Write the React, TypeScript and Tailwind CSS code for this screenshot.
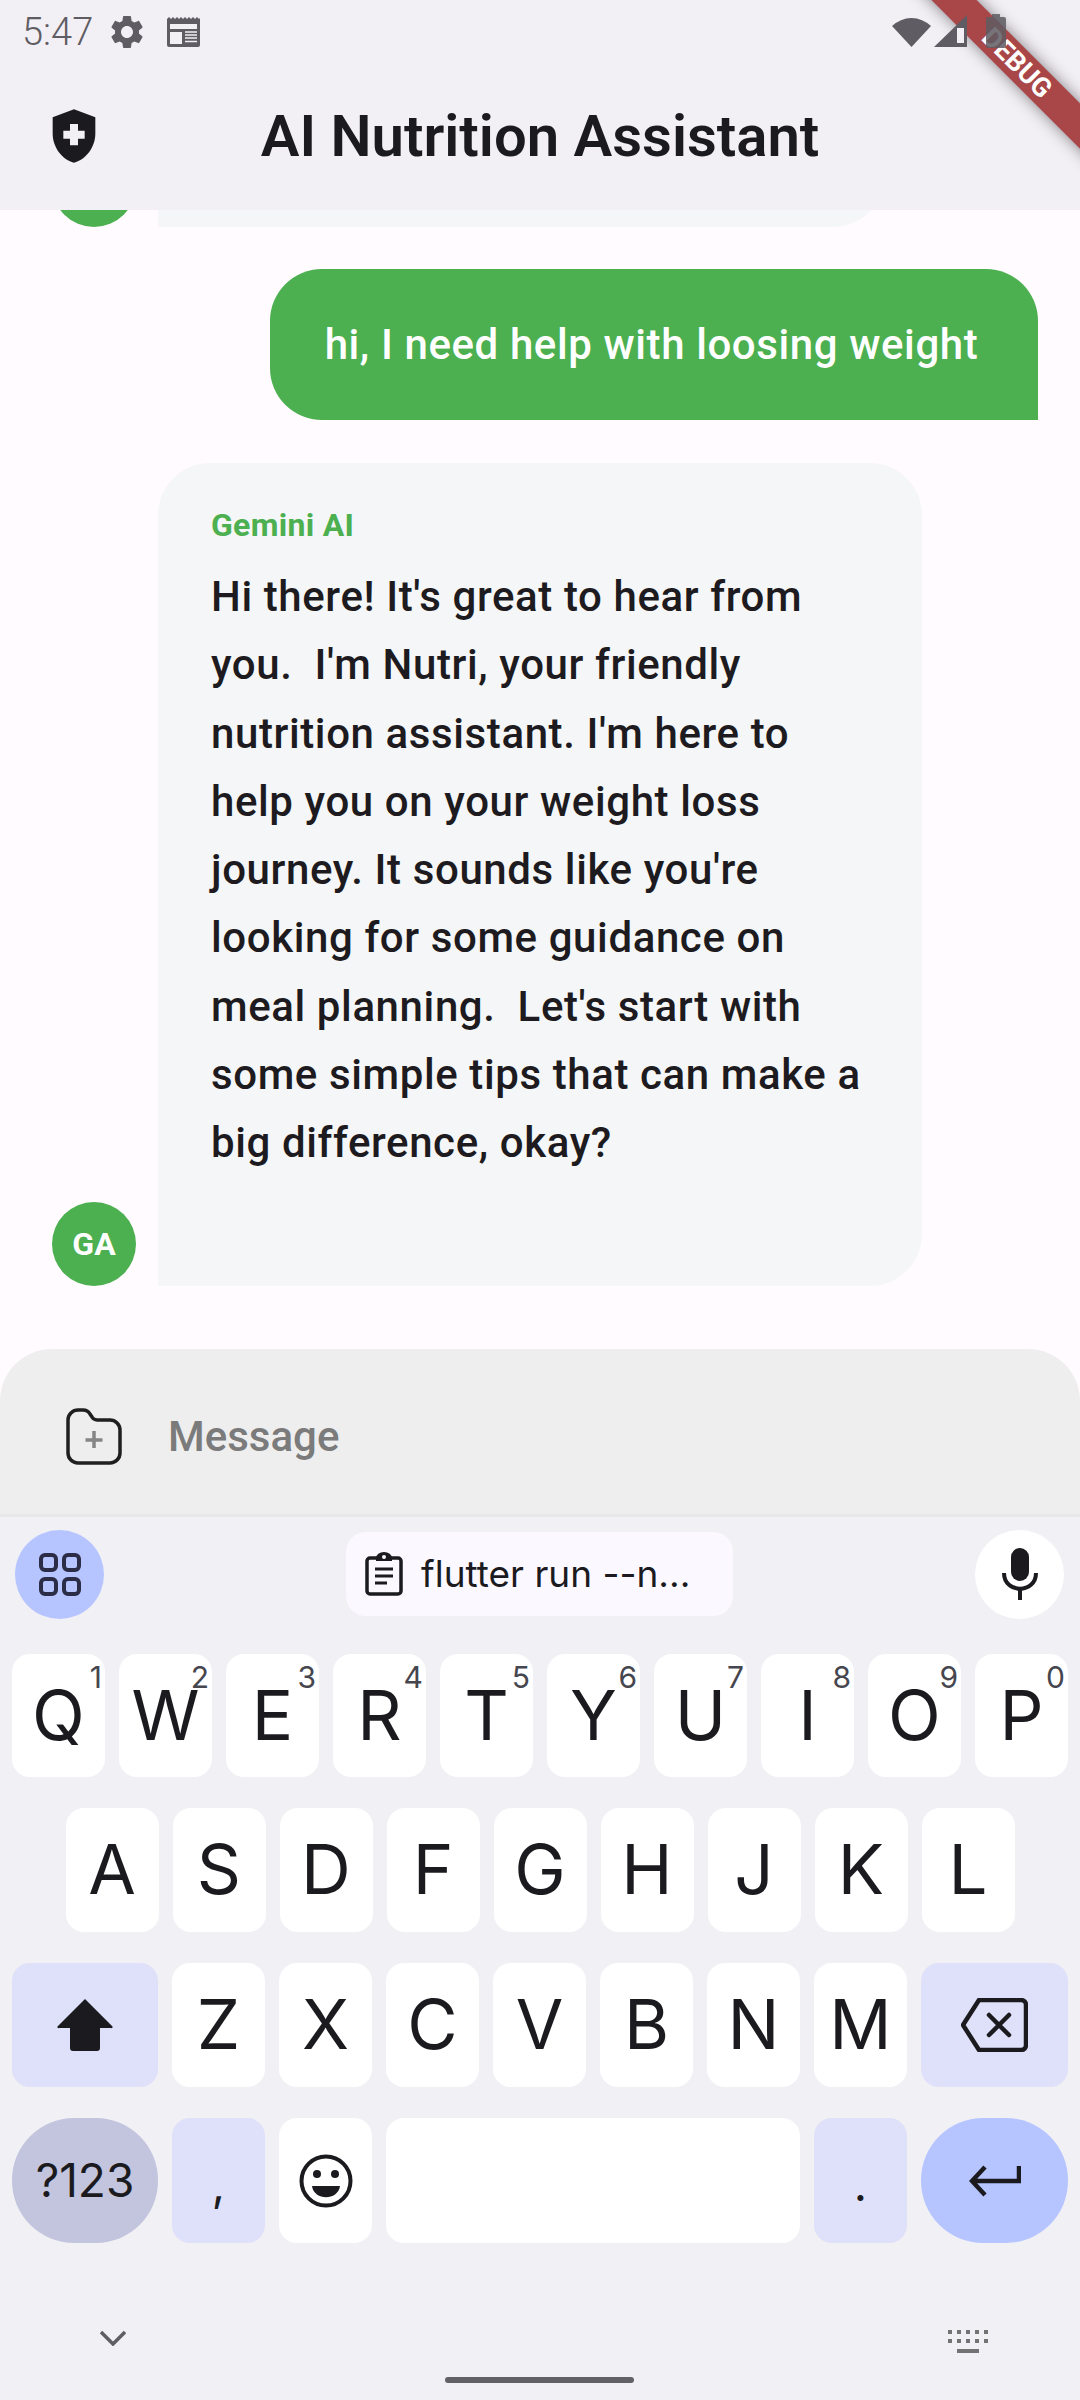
import type { ReactNode } from "react";

const row1 = [["Q", "1"], ["W", "2"], ["E", "3"], ["R", "4"], ["T", "5"], ["Y", "6"], ["U", "7"], ["I", "8"], ["O", "9"], ["P", "0"]];
const row2 = ["A", "S", "D", "F", "G", "H", "J", "K", "L"];
const row3 = ["Z", "X", "C", "V", "B", "N", "M"];

function Key({ children, hint }: { children?: ReactNode; hint?: string }) {
  return (
    <div className="relative flex h-full w-[93px] shrink-0 items-center justify-center rounded-[18px] bg-white text-[69px] font-normal text-[#1b1b1f]">
      {children}
      {hint && <span className="absolute top-[5px] right-[3px] text-[30px] font-normal leading-[36px] text-[#46464f]">{hint}</span>}
    </div>
  );
}

function StatusBar() {
  return (
    <div className="flex h-[63px] items-center pl-[22px] pr-[74px] pt-[1px] text-[#5f5c63]">
      <span className="text-[38px] font-light leading-[40px]">5:47</span>
      <svg viewBox="0 0 24 24" className="ml-[14px] h-[40px] w-[40px] fill-[#5f5c63]">
        <path d="M19.14 12.94c.04-.3.06-.61.06-.94 0-.32-.02-.64-.07-.94l2.03-1.58c.18-.14.23-.41.12-.61l-1.92-3.32c-.12-.22-.37-.29-.59-.22l-2.39.96c-.5-.38-1.03-.7-1.62-.94l-.36-2.54c-.04-.24-.24-.41-.48-.41h-3.84c-.24 0-.43.17-.47.41l-.36 2.54c-.59.24-1.13.57-1.62.94l-2.39-.96c-.22-.08-.47 0-.59.22L2.74 8.87c-.12.21-.08.47.12.61l2.03 1.58c-.05.3-.09.63-.09.94s.02.64.07.94l-2.03 1.58c-.18.14-.23.41-.12.61l1.92 3.32c.12.22.37.29.59.22l2.39-.96c.5.38 1.03.7 1.62.94l.36 2.54c.05.24.24.41.48.41h3.84c.24 0 .44-.17.47-.41l.36-2.54c.59-.24 1.13-.56 1.62-.94l2.39.96c.22.08.47 0 .59-.22l1.92-3.32c.12-.22.07-.47-.12-.61l-2.01-1.58zM12 15.6c-1.98 0-3.6-1.62-3.6-3.6s1.62-3.6 3.6-3.6 3.6 1.62 3.6 3.6-1.62 3.6-3.6 3.6z" />
      </svg>
      <svg viewBox="0 0 33 30" className="ml-[20px] h-[30px] w-[33px]">
        <path d="M0 2 L2 0 L4 2 L6 0 L8 2 L10 0 L12 2 L14 0 L16 2 L18 0 L20 2 L22 0 L24 2 L26 0 L28 2 L30 0 L32 2 L33 1 V28 a2 2 0 0 1 -2 2 H2 a2 2 0 0 1 -2 -2 Z" fill="#5f5c63" />
        <rect x="3" y="7" width="27" height="5" fill="#f2eff5" />
        <rect x="3" y="15" width="12" height="12" fill="#f2eff5" />
        <path d="M18 15 H30 M18 18 H30 M18 21 H30 M18 24.500 H30" stroke="#f2eff5" strokeWidth="1.500" />
      </svg>
      {/* system icons sit above the app's debug banner */}
      <div className="relative z-10 mb-[3px] ml-auto flex items-center">
        <svg viewBox="0 0 39 32" className="h-[32px] w-[39px]">
          <path d="M0 11 A28 28 0 0 1 39 11 L19.500 32 Z" fill="#5f5c63" />
        </svg>
        <svg viewBox="0 0 33 32" className="ml-[3px] h-[32px] w-[33px]">
          <path d="M33 0 V32 H0 Z" fill="#5f5c63" />
          <rect x="23" y="13" width="7" height="15" fill="#f2eff5" />
        </svg>
        <svg viewBox="0 0 20 34" className="ml-[19px] h-[34px] w-[20px] opacity-85">
          <path d="M6 0 H14 V3 H18 a2 2 0 0 1 2 2 V32 a2 2 0 0 1 -2 2 H2 a2 2 0 0 1 -2 -2 V5 a2 2 0 0 1 2 -2 H6 Z" fill="#5f5c63" />
        </svg>
      </div>
    </div>
  );
}

function AppBar() {
  return (
    <div className="relative flex h-[147px] items-center justify-center pb-[2px]">
      <svg viewBox="0 0 24 24" className="absolute left-[42px] top-[41px] h-[64px] w-[64px] fill-[#1b1b1f]">
        <path d="M10.500 13H8v-3h2.500V7.500h3V10H16v3h-2.500v2.500h-3V13zM12 2L4 5v6.090c0 5.050 3.410 9.760 8 10.910 4.590-1.150 8-5.860 8-10.910V5l-8-3z" />
      </svg>
      <h1 className="text-[58px] font-semibold leading-[64px] text-[#1b1b1f]">AI Nutrition Assistant</h1>
    </div>
  );
}

function Avatar({ label }: { label?: string }) {
  return (
    <div className="flex h-[84px] w-[84px] shrink-0 items-center justify-center rounded-full bg-[#4caf50] text-[32px] font-bold text-white">{label}</div>
  );
}

function Chat() {
  return (
    <div className="flex min-h-0 flex-1 flex-col justify-end overflow-hidden bg-[#fffbff] pb-[63px]">
      <div className="flex shrink-0 items-end pl-[52px]">
        <Avatar />
        <div className="ml-[22px] h-[120px] w-[727px] rounded-t-[52px] rounded-br-[52px] bg-[#f5f6f7]" />
      </div>
      <div className="mt-[42px] flex shrink-0 justify-end pr-[42px]">
        <div className="flex h-[151px] w-[768px] items-center justify-center rounded-t-[52px] rounded-bl-[52px] bg-[#4caf50] pr-[5px] text-[42px] font-medium tracking-[0.6px] text-white">
          hi, I need help with loosing weight
        </div>
      </div>
      <div className="mt-[43px] flex shrink-0 items-end pl-[52px]">
        <Avatar label="GA" />
        <div className="ml-[22px] h-[823px] w-[764px] rounded-t-[52px] rounded-br-[52px] bg-[#f5f6f7] pl-[53px] pr-[49px] pt-[45px]">
          <div className="text-[32px] font-bold leading-[34px] tracking-[0.3px] text-[#4caf50]">Gemini AI</div>
          <p className="mt-[21px] whitespace-pre-wrap text-[42px] font-medium leading-[68.300px] tracking-[0.6px] text-[#1d1b20]">
            {"Hi there! It's great to hear from you.  I'm Nutri, your friendly nutrition assistant. I'm here to help you on your weight loss journey. It sounds like you're looking for some guidance on meal planning.  Let's start with some simple tips that can make a big difference, okay?"}
          </p>
        </div>
      </div>
    </div>
  );
}

function InputBar() {
  return (
    <div className="flex h-[168px] shrink-0 items-center rounded-t-[52px] border-b-[3px] border-[#e8e8e8] bg-[#eeeeee] pl-[66px] pt-[10px]">
      <svg viewBox="0 0 56 57" className="h-[57px] w-[56px]" fill="none">
        <path d="M2 12 a10 10 0 0 1 10 -10 H17 a8 8 0 0 1 7 4 l2 3 a6 6 0 0 0 5 3 H44 a10 10 0 0 1 10 10 V45 a10 10 0 0 1 -10 10 H12 a10 10 0 0 1 -10 -10 Z" stroke="#1f1f1f" strokeWidth="3.500" />
        <path d="M28 23 V40 M19.500 32 H36.500" stroke="#858585" strokeWidth="3.500" />
      </svg>
      <span className="ml-[46px] text-[42px] font-medium text-[#7b7b7b]">Message</span>
    </div>
  );
}

function Suggestions() {
  return (
    <div className="relative flex h-[137px] items-center pt-[13px] pb-[36px]">
      <div className="ml-[15px] flex h-[89px] w-[89px] items-center justify-center rounded-full bg-[#b6c5ff]">
        <svg viewBox="0 0 42 43" className="h-[43px] w-[42px]" fill="none" stroke="#2a2d45" strokeWidth="4">
          <rect x="2" y="2" width="15" height="15" rx="4" />
          <rect x="25" y="2" width="15" height="15" rx="4" />
          <rect x="2" y="26" width="15" height="15" rx="4" />
          <rect x="25" y="26" width="15" height="15" rx="4" />
        </svg>
      </div>
      <div className="ml-[242px] flex h-[84px] w-[387px] items-center rounded-[20px] bg-[#fbf9ff] pl-[19px]">
        <svg viewBox="0 0 38 44" className="h-[44px] w-[38px]" fill="none">
          <path d="M12 6 H5 a3 3 0 0 0 -3 3 V39 a3 3 0 0 0 3 3 H33 a3 3 0 0 0 3 -3 V9 a3 3 0 0 0 -3 -3 H26" stroke="#1b1b1f" strokeWidth="3.500" />
          <path d="M11 9 H27 V6 A8 6 0 0 0 11 6 Z" fill="#1b1b1f" />
          <circle cx="19" cy="5" r="2" fill="#fbf9ff" />
          <path d="M10 17 H28 M10 24 H28 M10 31 H22" stroke="#1b1b1f" strokeWidth="3" />
        </svg>
        <span className="ml-[18px] text-[37px] text-[#1b1b1f]">flutter run --n...</span>
      </div>
      <div className="ml-auto mr-[16px] flex h-[89px] w-[89px] items-center justify-center rounded-full bg-white">
        <svg viewBox="0 0 36 52" className="h-[52px] w-[36px]" fill="none">
          <rect x="9" y="0" width="18" height="33" rx="9" fill="#1b1b1f" />
          <path d="M2 25 C2 46 34 46 34 25" stroke="#1b1b1f" strokeWidth="4" />
          <path d="M18 40 V52" stroke="#1b1b1f" strokeWidth="4" />
        </svg>
      </div>
    </div>
  );
}

function Keyboard() {
  return (
    <div className="flex flex-1 flex-col bg-[#f1f0f5] font-['Inter',sans-serif]">
      <Suggestions />
      <div className="flex flex-col gap-[31px] px-[12px]">
        <div className="flex h-[123px] gap-[14px]">
          {row1.map(([k, hint]) => (
            <Key key={k} hint={hint}>{k}</Key>
          ))}
        </div>
        <div className="flex h-[124px] justify-center gap-[14px]">
          {row2.map((k) => (
            <Key key={k}>{k}</Key>
          ))}
        </div>
        <div className="flex h-[124px] gap-[14px]">
          <div className="flex w-[146px] items-center justify-center rounded-[18px] bg-[#dfe0f9]">
            <svg viewBox="0 0 56 52" className="h-[52px] w-[56px] fill-[#1b1b1f]">
              <path d="M28 0 L55 27 a1 1 0 0 1 -1 2 H43 V49 a3 3 0 0 1 -3 3 H16 a3 3 0 0 1 -3 -3 V29 H2 a1 1 0 0 1 -1 -2 Z" />
            </svg>
          </div>
          {row3.map((k) => (
            <Key key={k}>{k}</Key>
          ))}
          <div className="flex w-[147px] items-center justify-center rounded-[18px] bg-[#dfe0f9]">
            <svg viewBox="0 0 67 54" className="h-[54px] w-[67px]" fill="none" stroke="#1b1b1f" strokeWidth="4.500" strokeLinejoin="round" strokeLinecap="round">
              <path d="M18 2 H60 a5 5 0 0 1 5 5 V47 a5 5 0 0 1 -5 5 H18 L2 27 Z" />
              <path d="M28 17 L48 37 M48 17 L28 37" />
            </svg>
          </div>
        </div>
        <div className="flex h-[125px] gap-[14px]">
          <div className="flex w-[146px] items-center justify-center rounded-[62px] bg-[#c3c5de] text-[46px] font-normal text-[#1b1b1f]">?123</div>
          <div className="flex w-[93px] items-center justify-center rounded-[18px] bg-[#dfe0f9] pt-[8px] text-[46px] text-[#1b1b1f]">,</div>
          <div className="flex w-[93px] items-center justify-center rounded-[18px] bg-white">
            <svg viewBox="0 0 54 54" className="h-[54px] w-[54px]" fill="none">
              <circle cx="27" cy="27" r="24.500" stroke="#1b1b1f" strokeWidth="4" />
              <circle cx="18" cy="20" r="4" fill="#1b1b1f" />
              <circle cx="36" cy="20" r="4" fill="#1b1b1f" />
              <path d="M13 32 H41 C39 47 15 47 13 32 Z" fill="#1b1b1f" />
            </svg>
          </div>
          <div className="w-[414px] rounded-[18px] bg-white" />
          <div className="flex w-[93px] items-center justify-center rounded-[18px] bg-[#dfe0f9] pt-[8px] text-[46px] text-[#1b1b1f]">.</div>
          <div className="flex w-[147px] items-center justify-center rounded-[62px] bg-[#b6c5ff]">
            <svg viewBox="0 0 52 32" className="h-[32px] w-[52px]" fill="none" stroke="#1b1b1f" strokeWidth="4.500">
              <path d="M50 1 V16 H4 M16 2 L3 16 L16 30" />
            </svg>
          </div>
        </div>
      </div>
      <div className="flex flex-1 items-start justify-between pl-[100px] pr-[92px] pt-[87px]">
        <svg viewBox="0 0 26 16" className="h-[16px] w-[26px]" fill="none" stroke="#5f5f63" strokeWidth="3.500">
          <path d="M1 2 L13 14 L25 2" />
        </svg>
        <svg viewBox="0 0 40 24" className="h-[24px] w-[40px] fill-[#737373]">
          <path d="M0 0h4v4h-4zM9 0h4v4h-4zM18 0h4v4h-4zM27 0h4v4h-4zM36 0h4v4h-4zM0 9h4v4h-4zM9 9h4v4h-4zM18 9h4v4h-4zM27 9h4v4h-4zM36 9h4v4h-4zM9 19h22v4h-22z" />
        </svg>
      </div>
    </div>
  );
}

export default function App() {
  return (
    <div className="relative flex h-[2400px] w-[1080px] flex-col overflow-hidden bg-[#f1f0f5] font-['Roboto',sans-serif]">
      <div className="shrink-0 bg-[#f2eff5]">
        <StatusBar />
        <AppBar />
      </div>
      <Chat />
      <div className="flex h-[1051px] shrink-0 flex-col bg-[#fffbff]">
        <InputBar />
        <Keyboard />
      </div>
      {/* home pill */}
      <div className="absolute bottom-[17px] left-[445px] h-[6px] w-[189px] rounded-full bg-[#626265]" />
      {/* flutter debug banner */}
      <div className="absolute left-[867px] top-[47px] flex h-[32px] w-[300px] rotate-45 items-center justify-center bg-[#961c1d]/80 text-[27px] font-bold text-white shadow-[0_0_16px_rgba(0,0,0,0.45)]">
        DEBUG
      </div>
    </div>
  );
}
